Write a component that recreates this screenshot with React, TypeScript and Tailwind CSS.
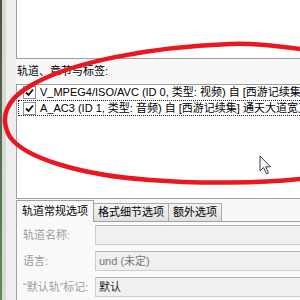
import React from 'react'

function Check() {
  return (
    <div className="w-[13px] h-[13px] shrink-0 border border-[#8e8f8f] bg-white flex items-center justify-center">
      <svg width="9" height="9" viewBox="0 0 9 9">
        <path d="M1 4.5 L3.5 7 L8 1.5" fill="none" stroke="#111" strokeWidth="1.8" />
      </svg>
    </div>
  )
}

function TrackRow({ text, focused }: { text: string; focused?: boolean }) {
  return (
    <div className={focused ? 'h-[16px] flex items-center gap-[4px] pl-[4px] border border-dotted border-[#222] whitespace-nowrap' : 'h-[15px] flex items-center gap-[4px] pl-[5px] whitespace-nowrap'}>
      <Check />
      <span>{text}</span>
    </div>
  )
}

function Field({ label, value, dark }: { label: string; value?: string; dark?: boolean }) {
  return (
    <div className="h-[20px] flex items-center">
      <div className="w-[72px] shrink-0 whitespace-nowrap text-[#9c9c9c]">{label}</div>
      <div className={'flex-1 h-full flex items-center px-[3px] bg-[#f0f0f0] border border-[#cdcdcd] border-t-[#b4b4b4] ' + (dark ? 'text-[#222]' : 'text-[#777]')}>
        {value}
      </div>
    </div>
  )
}

export default function App() {
  return (
    <div className="relative w-[300px] h-[300px] overflow-hidden bg-[#f8f8f8] text-[11px] leading-none text-black font-['Liberation_Sans','Noto_Sans_CJK_SC',sans-serif]">
      <div className="flex h-full">
        <div className="flex shrink-0">
          <div className="w-[2px] bg-gradient-to-b from-[#4d4d4d] to-[#62885a]" />
          <div className="w-[4px] bg-[#d5dbcf]" />
          <div className="w-[10px] bg-[#eeeeee]" />
        </div>

        <div className="flex flex-col w-[330px] shrink-0">
          <div className="h-[59px] shrink-0 bg-white border-l border-b border-[#a0a0a0]" />

          <div className="h-[25px] shrink-0 flex items-center pl-[1px]">轨道、章节与标签:</div>

          <div className="h-[115px] shrink-0 bg-white border border-r-0 border-[#a0a0a0] pl-[1px]">
            <TrackRow text="V_MPEG4/ISO/AVC (ID 0, 类型: 视频) 自 [西游记续集] 通天大道宽" />
            <TrackRow text="A_AC3 (ID 1, 类型: 音频) 自 [西游记续集] 通天大道宽又阔" focused />
          </div>

          <div className="h-[23px] shrink-0 flex items-end border-b border-[#a0a0a0]">
            <div className="relative -mb-px h-[22px] px-[5px] flex items-center bg-[#fafafa] border border-b-0 border-[#a0a0a0]">
              轨道常规选项
            </div>
            <div className="h-[18px] px-[4px] flex items-center bg-gradient-to-b from-[#f3f3f3] to-[#e1e1e1] border border-l-0 border-b-0 border-[#acacac]">
              格式细节选项
            </div>
            <div className="h-[18px] px-[4px] flex items-center bg-gradient-to-b from-[#f3f3f3] to-[#e1e1e1] border border-l-0 border-b-0 border-[#acacac]">
              额外选项
            </div>
          </div>

          <div className="flex-1 border-l border-[#a0a0a0] bg-[#fafafa] pt-[3px] pl-[6px] flex flex-col gap-[6px]">
            <Field label="轨道名称:" />
            <Field label="语言:" value="und (未定)" />
            <Field label="“默认轨”标记:" value="默认" dark />
          </div>
        </div>
      </div>

      <svg className="absolute inset-0 pointer-events-none" width="300" height="300" viewBox="0 0 300 300">
        <path
          d="M300 49 C270 45 250 43 230 44 C150 47 70 62 30 86 C6 100 -1 118 10 137 C25 158 80 175 150 180 C200 184 260 183 300 179"
          fill="none"
          stroke="#ea1620"
          strokeWidth="4.5"
          strokeLinecap="round"
        />
      </svg>

      <svg className="absolute left-[259px] top-[155px] pointer-events-none" width="14" height="20" viewBox="0 0 14 20">
        <path d="M1 1 L1 16 L4.5 12.5 L7.5 19 L9.5 18 L6.7 11.8 L11.5 11.8 Z" fill="#f4f4f4" stroke="#3b3f55" strokeWidth="1" strokeLinejoin="round" />
      </svg>
    </div>
  )
}
